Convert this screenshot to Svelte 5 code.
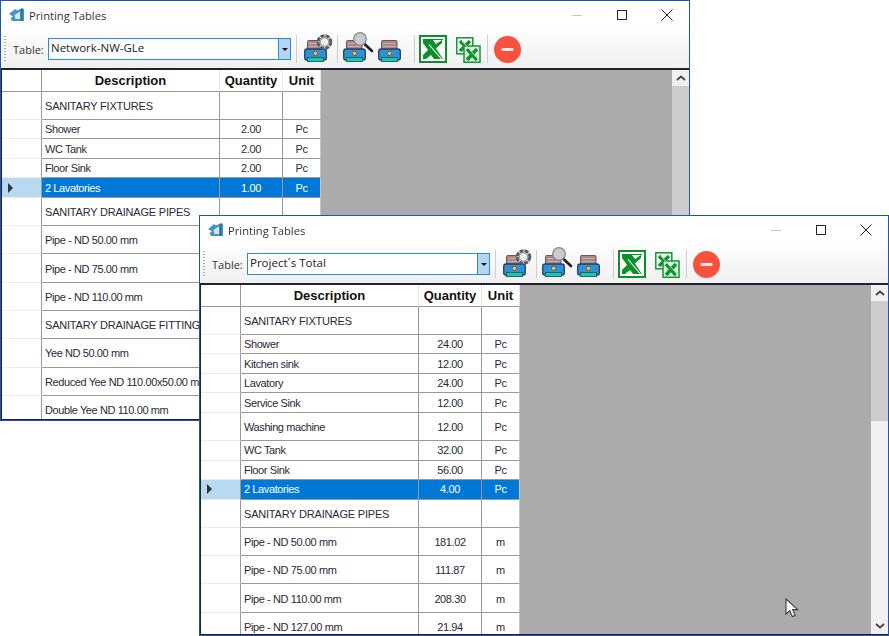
<script>
  const windows = [
    {
      id: 'back',
      table: 'Network-NW-GLe',
      rows: [
        { d: 'SANITARY FIXTURES', t: 1, caps: 1 },
        { d: 'Shower', q: '2.00', u: 'Pc' },
        { d: 'WC Tank', q: '2.00', u: 'Pc' },
        { d: 'Floor Sink', q: '2.00', u: 'Pc' },
        { d: '2 Lavatories', q: '1.00', u: 'Pc', sel: 1 },
        { d: 'SANITARY DRAINAGE PIPES', t: 1, caps: 1 },
        { d: 'Pipe - ND 50.00 mm', t: 1 },
        { d: 'Pipe - ND 75.00 mm', t: 1 },
        { d: 'Pipe - ND 110.00 mm', t: 1 },
        { d: 'SANITARY DRAINAGE FITTINGS', t: 1, caps: 1 },
        { d: 'Yee ND 50.00 mm', t: 1 },
        { d: 'Reduced Yee ND 110.00x50.00 mm', t: 1 },
        { d: 'Double Yee ND 110.00 mm', t: 1 }
      ]
    },
    {
      id: 'front',
      table: 'Project´s Total',
      rows: [
        { d: 'SANITARY FIXTURES', t: 1, caps: 1 },
        { d: 'Shower', q: '24.00', u: 'Pc' },
        { d: 'Kitchen sink', q: '12.00', u: 'Pc' },
        { d: 'Lavatory', q: '24.00', u: 'Pc' },
        { d: 'Service Sink', q: '12.00', u: 'Pc' },
        { d: 'Washing machine', q: '12.00', u: 'Pc', t: 1 },
        { d: 'WC Tank', q: '32.00', u: 'Pc' },
        { d: 'Floor Sink', q: '56.00', u: 'Pc' },
        { d: '2 Lavatories', q: '4.00', u: 'Pc', sel: 1 },
        { d: 'SANITARY DRAINAGE PIPES', t: 1, caps: 1 },
        { d: 'Pipe - ND 50.00 mm', q: '181.02', u: 'm', t: 1 },
        { d: 'Pipe - ND 75.00 mm', q: '111.87', u: 'm', t: 1 },
        { d: 'Pipe - ND 110.00 mm', q: '208.30', u: 'm', t: 1 },
        { d: 'Pipe - ND 127.00 mm', q: '21.94', u: 'm', t: 1 }
      ]
    }
  ];
</script>

{#snippet printer()}
  <g transform="translate(0 5)">
    <rect x="3.500" y=".5" width="15.500" height="11" rx="1" fill="#ab8788" stroke="#6c585c"/>
    <path d="M5 3.500h12.500M5 6.500h12.500" stroke="#c8acac"/>
    <path d="M.7 11.500q0-2.500 2.500-2.500h16.600q2.500 0 2.500 2.500v6.500q0 2-2 2H2.700q-2 0-2-2z" fill="#2f8fd8" stroke="#24425f" stroke-width="1.300"/>
    <circle cx="11.500" cy="13.300" r="2.100" fill="#f7c93c" stroke="#5b5230" stroke-width=".8"/>
    <rect x="3.500" y="17.500" width="16" height="4" fill="#1fc3b5" stroke="#155f60" stroke-width=".9"/>
  </g>
{/snippet}

{#snippet windowView(w)}
  <section class="window {w.id}">
    <header class="titlebar">
      <svg class="appicon" viewBox="0 0 15 14" width="15" height="14" aria-hidden="true">
        <path d="M0 6l6-5 2 1.500L13 0l2 1v12H3L1.500 10 4 8.500z" fill="#4a93bf"/>
        <path d="M5.500 7L11 3.500V11H6.500z" fill="#d4e6f0"/>
        <path d="M12.700 1v12" stroke="#2a6c98" stroke-width="1.600"/>
      </svg>
      <span class="wintitle">Printing Tables</span>
      <div class="controls">
        <span class="ctl"><svg viewBox="0 0 12 12" width="12" height="12" aria-hidden="true"><path d="M1 6.500h10" stroke="#c8c8c8"/></svg></span>
        <span class="ctl"><svg viewBox="0 0 12 12" width="12" height="12" aria-hidden="true"><rect x="1.500" y="1.500" width="9" height="9" fill="none" stroke="#222"/></svg></span>
        <span class="ctl"><svg viewBox="0 0 12 12" width="12" height="12" aria-hidden="true"><path d="M.5.500l11 11M11.500.500l-11 11" stroke="#222"/></svg></span>
      </div>
    </header>

    <div class="toolbar">
      <span class="grip"></span>
      <span class="label">Table:</span>
      <div class="combo">
        <span class="value">{w.table}</span>
        <span class="drop"><i></i></span>
      </div>
      <span class="sep s1"></span>

      <svg class="ico gear" viewBox="0 0 30 28" aria-hidden="true">
        {@render printer()}
        <circle cx="20.500" cy="7" r="6.300" fill="#eaeaea" stroke="#5a5d61" stroke-width="3" stroke-dasharray="4 1"/>
        <circle cx="20.500" cy="7" r="4.300" fill="#ececec" stroke="#8a8c90" stroke-width="1"/>
      </svg>
      <span class="sep s2"></span>

      <svg class="ico mag" viewBox="0 0 30 28" aria-hidden="true">
        {@render printer()}
        <path d="M21.500 9l7.500 7" stroke="#1d1d1d" stroke-width="2.600" stroke-linecap="round"/>
        <circle cx="17" cy="4" r="6.300" fill="#c9cbce" stroke="#85888c" stroke-width="1.300"/>
      </svg>
      <svg class="ico plain" viewBox="0 0 23 28" aria-hidden="true">
        {@render printer()}
      </svg>
      <span class="sep s3"></span>

      <svg class="ico xl" viewBox="0 0 28 28" aria-hidden="true">
        <rect x="1" y="1" width="26" height="26" fill="#fff" stroke="#0d8f2c" stroke-width="2"/>
        <path d="M4 4h20v1H4zM4 5h10l3 4 6-4v3l-6 5.500 7 10.500h-9l-3-4-5 4H4v-4l5-5-5-7z" fill="#0d8f2c"/>
        <path d="M10 9.500L22.500 24" stroke="#fff" stroke-width="1.100"/>
      </svg>
      <svg class="ico xl2" viewBox="0 0 25 28" aria-hidden="true">
        <rect x=".8" y="2.800" width="16" height="16" fill="#fff" stroke="#10952f" stroke-width="1.500"/>
        <path d="M4 6l10 10M14 6L4 16" stroke="#10952f" stroke-width="3.600"/>
        <rect x="8" y="11" width="16" height="16.300" fill="#dff0e2" stroke="#10952f" stroke-width="1.500"/>
        <path d="M11 14l10 11M21 14L11 25" stroke="#10952f" stroke-width="3.600"/>
        <path d="M6 6l17 19" stroke="#fff" stroke-width=".7"/>
      </svg>
      <span class="sep s4"></span>

      <svg class="ico stop" viewBox="0 0 27 27" aria-hidden="true">
        <circle cx="13.500" cy="13.500" r="13.500" fill="#f8523f"/>
        <rect x="7.500" y="12" width="12" height="3" rx="1" fill="#fbe9e4"/>
      </svg>
    </div>

    <div class="grid">
      <div class="tablearea">
        <div class="row head">
          <span class="rh"></span>
          <span class="c desc">Description</span>
          <span class="c qty">Quantity</span>
          <span class="c unit">Unit</span>
        </div>
        {#each w.rows as r}
          <div class="row" class:tall={r.t} class:sel={r.sel} class:caps={r.caps}>
            <span class="rh">{#if r.sel}<i class="tri"></i>{/if}</span>
            <span class="c desc">{r.d}</span>
            <span class="c qty">{r.q ?? ''}</span>
            <span class="c unit">{r.u ?? ''}</span>
          </div>
        {/each}
      </div>
      <div class="scrollbar">
        <span class="arrow"><svg viewBox="0 0 10 6" width="10" height="6" aria-hidden="true"><path d="M1 5l4-3.500L9 5" fill="none" stroke="#444" stroke-width="1.800"/></svg></span>
        <span class="thumb"></span>
        <span class="track"></span>
        <span class="arrow"><svg viewBox="0 0 10 6" width="10" height="6" aria-hidden="true"><path d="M1 1l4 3.500L9 1" fill="none" stroke="#444" stroke-width="1.800"/></svg></span>
      </div>
    </div>
  </section>
{/snippet}

<main class="desktop">
  {#each windows as w}
    {@render windowView(w)}
  {/each}
  <svg class="cursor" viewBox="0 0 14 20" width="14" height="20" aria-hidden="true">
    <path d="M1 1v15l3.800-3.400 2.600 6 2.800-1.200-2.600-5.800h5z" fill="#fff" stroke="#3a3a48" stroke-width="1.100"/>
  </svg>
</main>

<style>
  :global(body) {
    margin: 0;
    background: #fff;
  }
  .desktop {
    position: relative;
    width: 889px;
    height: 636px;
    overflow: hidden;
    font-family: "Liberation Sans", Arial, sans-serif;
    color: #222;
    filter: blur(0.3px);
  }
  .window {
    position: absolute;
    width: 690px;
    height: 421px;
    box-sizing: border-box;
    border: 1px solid #1d55b4;
    background: #fff;
    display: flex;
    flex-direction: column;
    overflow: hidden;
  }
  .back { left: 0; top: 0; }
  .front { left: 199px; top: 215px; }

  .titlebar {
    height: 29px;
    flex: none;
    box-sizing: border-box;
    display: flex;
    align-items: center;
    padding-left: 8px;
    padding-bottom: 1px;
  }
  .appicon { margin-right: 5px; }
  .wintitle {
    font-family: "Open Sans", sans-serif;
    font-size: 11.200px;
    color: #333;
  }
  .controls { margin-left: auto; display: flex; }
  .ctl {
    width: 45px;
    height: 28px;
    display: flex;
    align-items: center;
    justify-content: center;
  }

  .toolbar {
    height: 38px;
    flex: none;
    display: flex;
    align-items: center;
    padding-left: 3px;
    box-sizing: border-box;
    background: linear-gradient(#fdfdfd, #f0f0f0);
  }
  .grip {
    width: 2px;
    height: 26px;
    margin-right: 7px;
    background: repeating-linear-gradient(#a9a9a9 0 1px, transparent 1px 3px);
  }
  .label {
    width: 34px;
    margin-right: 1px;
    font-family: "Open Sans", sans-serif;
    font-size: 11px;
    color: #333;
  }
  .combo {
    width: 243px;
    height: 22px;
    box-sizing: border-box;
    border: 1px solid #2a8ae0;
    background: #fff;
    display: flex;
    align-items: stretch;
  }
  .value {
    flex: 1;
    padding-left: 2px;
    font-family: "Open Sans", sans-serif;
    font-size: 11.500px;
    line-height: 18px;
    color: #222;
  }
  .drop {
    width: 11px;
    background: #b5d6f2;
    border-left: 1px solid #2a8ae0;
    display: flex;
    align-items: center;
    justify-content: center;
  }
  .drop i {
    width: 0;
    height: 0;
    border: 3px solid transparent;
    border-top: 3px solid #111;
    border-bottom: 0;
  }
  .sep {
    width: 1px;
    height: 28px;
    background: #cfcfcf;
    flex: none;
  }
  .s1 { margin-left: 5px; }
  .s2 { margin-left: 3px; }
  .s3 { margin-left: 13px; }
  .s4 { margin-left: 6px; }
  .ico { flex: none; display: block; overflow: visible; }
  .gear { width: 30px; height: 28px; margin-left: 7px; }
  .mag { width: 30px; height: 28px; margin-left: 5px; }
  .plain { width: 23px; height: 28px; margin-left: 5px; }
  .xl { width: 28px; height: 28px; margin-left: 4px; }
  .xl2 { width: 25px; height: 28px; margin-left: 9px; }
  .stop { width: 27px; height: 27px; margin-left: 6px; }

  .grid {
    flex: 1;
    min-height: 0;
    display: flex;
    border: 1px solid #20222e;
    border-right-width: 0;
    border-top-width: 2px;
    overflow: hidden;
    background: #ababab;
  }
  .tablearea { flex: 1; min-width: 0; overflow: hidden; }
  .row {
    display: grid;
    grid-template-columns: 40px 178px 63px 38px;
    width: 319px;
    height: 19.500px;
    font-size: 11px;
    letter-spacing: -0.4px;
    background: #fff;
    color: #2a2a33;
  }
  .row.caps { letter-spacing: -0.2px; }
  .row.tall { height: 28.300px; }
  .row.tall .c { padding-top: 1px; }
  .row.head {
    height: 21.500px;
    font-size: 13px;
    letter-spacing: 0;
    font-weight: 700;
    color: #111;
  }
  .rh {
    display: flex;
    align-items: center;
    box-sizing: border-box;
    border-right: 1px solid #999;
    border-bottom: 1px solid #ececec;
    padding-left: 6px;
  }
  .c {
    display: flex;
    align-items: center;
    box-sizing: border-box;
    border-right: 1px solid #999;
    border-bottom: 1px solid #999;
    white-space: nowrap;
    overflow: hidden;
  }
  .desc { padding-left: 3px; }
  .qty, .unit { justify-content: center; }
  .head .c {
    justify-content: center;
    padding: 1px 0 0;
    border-right-color: #e6e6e6;
  }
  .head .rh { border-bottom-color: #999; }
  .unit { border-right-color: #c4c4c4; }
  .sel { color: #fff; }
  .sel .rh { background: #b8d9f2; }
  .sel .c { background: #0078d7; }
  .tri {
    width: 0;
    height: 0;
    border-left: 5px solid #333;
    border-top: 5px solid transparent;
    border-bottom: 5px solid transparent;
  }

  .scrollbar {
    width: 17px;
    flex: none;
    background: #f0f0f0;
    display: flex;
    flex-direction: column;
  }
  .arrow {
    height: 16px;
    flex: none;
    display: flex;
    align-items: center;
    justify-content: center;
  }
  .thumb { height: 120px; flex: none; background: #cdcdcd; }
  .back .thumb { height: 140px; }
  .track { flex: 1; }

  .cursor {
    position: absolute;
    left: 785px;
    top: 598px;
  }
</style>
